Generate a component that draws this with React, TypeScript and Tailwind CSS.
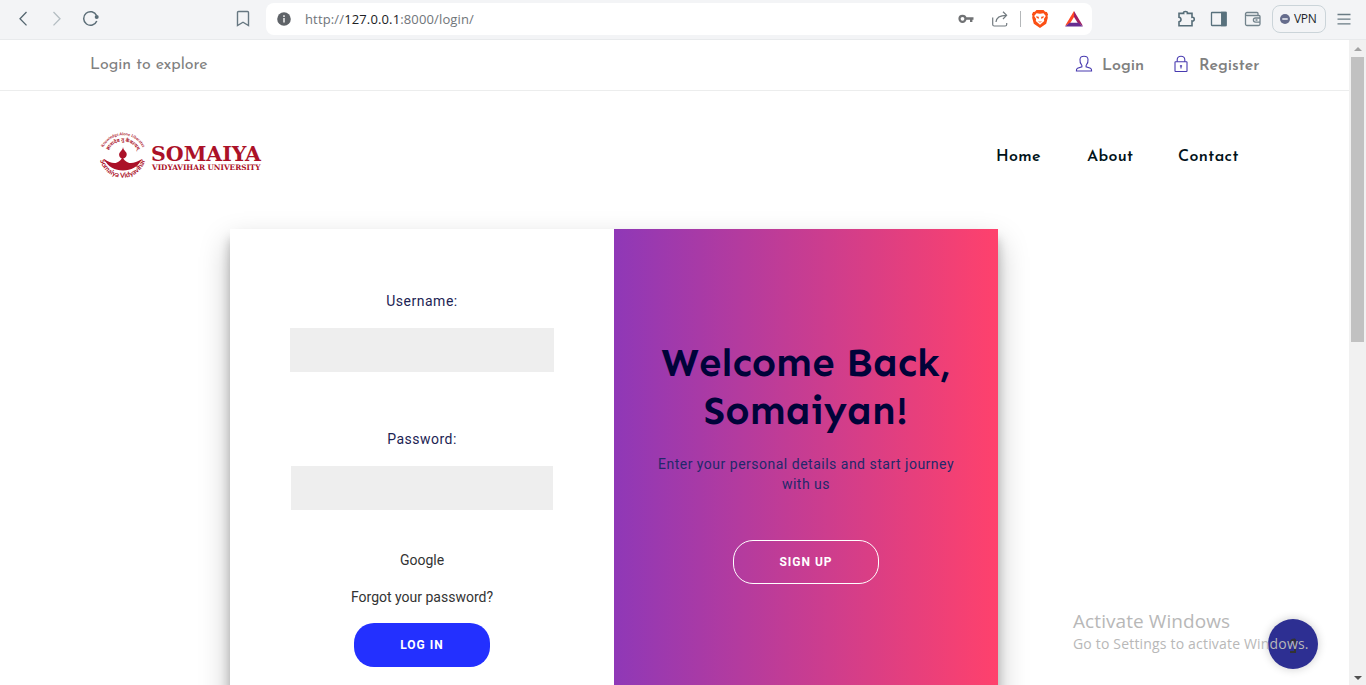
import React from "react";

const JOSEFIN = "font-['Josefin_Sans','Lato',sans-serif]";

function Toolbar() {
  return (
    <header className="flex h-10 shrink-0 items-center border-b border-[#e8eaec] bg-[#f3f4f6] pb-px text-[#5f7480]">
      <svg className="ml-[13px] h-5 w-5" viewBox="0 0 20 20" fill="none" stroke="#53656f" strokeWidth="1.3"><path d="M13.5 3 7 9.700l6.500 6.700" /></svg>
      <svg className="ml-[13px] h-5 w-5" viewBox="0 0 20 20" fill="none" stroke="#b4bdc2" strokeWidth="1.300"><path d="M7.500 3 14 9.700 7.500 16.400" /></svg>
      <svg className="ml-[15px] h-5 w-5" viewBox="0 0 20 20" fill="none" stroke="#5b6d77" strokeWidth="1.500"><path d="M15.600 6.500A6.800 6.800 0 1 0 15.800 12" /><circle cx="15.700" cy="8" r="2" fill="#5b6d77" stroke="none" /></svg>
      <svg className="ml-[132px] h-5 w-5" viewBox="0 0 20 20" fill="none" stroke="#667781" strokeWidth="1.400"><path d="M5.500 2.500h9a1 1 0 0 1 1 1v13L10 13.200 4.500 16.500v-13a1 1 0 0 1 1-1Z" /></svg>
      <div className="ml-[13px] flex h-8 w-[826px] shrink-0 items-center rounded-lg bg-white">
        <svg className="ml-[11px] h-[14px] w-[14px]" viewBox="0 0 14 14"><circle cx="7" cy="7" r="6.800" fill="#5f6368" /><path d="M6.200 6h1.600v4.500H6.200zM6.200 3.300h1.600v1.600H6.200z" fill="#e8e8e8" /></svg>
        <span className="ml-[14px] mt-px w-[171px] whitespace-nowrap font-['Open_Sans',sans-serif] text-[13px] tracking-[0.14px] text-[#70757a]">http://<span className="text-[#202124]">127.0.0.1</span>:8000/login/</span>
        <svg className="ml-[480px] h-5 w-5" viewBox="0 0 20 20" fill="none" stroke="#707274"><circle cx="6.500" cy="9.800" r="3" strokeWidth="2.200" /><path d="M10 9.500h7.500M15.200 9.500v3.500" strokeWidth="2.400" /></svg>
        <svg className="ml-[14px] h-5 w-5" viewBox="0 0 20 20" fill="none" stroke="#737b80" strokeWidth="1.200"><path d="M2.700 8.500v7q0 1.500 1.500 1.500h11q1.500 0 1.500-1.500V14M6 13c.300-4.600 3-6.700 10.500-6.700M13 2.800l3.600 3.500L13 10" /></svg>
        <span className="ml-[10px] h-4 w-px bg-[#b4b7b9]" />
        <BraveMark />
        <svg className="ml-[16px] h-[18px] w-[18px]" viewBox="0 0 18 18"><path d="M9 1 0 16l5.100-2.800L9 7Z" fill="#ff4724" /><path d="m9 1 9 15-5.100-2.800L9 7Z" fill="#9e1f63" /><path d="m0 16.500 4.700-3.700h8.600l4.700 3.700Z" fill="#662d91" /></svg>
      </div>
      <svg className="ml-[84px] h-5 w-5" viewBox="0 0 20 20" fill="none" stroke="#566d78" strokeWidth="1.600"><path d="M3 4.400h4.600c-.8-2.600 4.500-2.600 3.800 0H16v3.900c3-.7 3 4.400 0 3.700v4.700H3v-3.800q2-.3 2-2.300T3 8.300Z" /></svg>
      <svg className="ml-[13px] h-5 w-5" viewBox="0 0 20 20" fill="none" stroke="#58717d" strokeWidth="1.300"><rect x="2.500" y="3.500" width="14.500" height="13" rx=".5" /><path d="M12.700 3.500H17v13h-4.300Z" fill="#58717d" /></svg>
      <svg className="ml-[14px] h-5 w-5" viewBox="0 0 20 20" fill="none" stroke="#72838c" strokeWidth="1.300"><path d="M15 6.500V4.500a1 1 0 0 0-1-1H4a1.500 1.500 0 0 0 0 3h12a1 1 0 0 1 1 1V15a1.500 1.500 0 0 1-1.500 1.500H4A1.500 1.500 0 0 1 2.500 15V5M17 9h-4.500a2 2 0 0 0 0 4.200H17ZM12.500 11H14.500" /></svg>
      <div className="ml-[9px] flex h-7 w-[54px] shrink-0 items-center rounded-lg border border-[#cbd4d9]">
        <svg className="ml-[7px] h-[10px] w-[10px]" viewBox="0 0 10 10"><circle cx="5" cy="5" r="5" fill="#656c8c" /><path d="M2.300 4.200h5.400v1.600H2.300z" fill="#e8eaf0" /></svg>
        <span className="ml-1 font-['Open_Sans',sans-serif] text-[12px] tracking-[-0.3px] text-[#20262b]">VPN</span>
      </div>
      <svg className="ml-[11px] h-[14px] w-[14px]" viewBox="0 0 14 14" stroke="#6a7b84" strokeWidth="1.300"><path d="M.5 2.500h13M.5 7.200h13M.5 11.900h13" /></svg>
    </header>
  );
}

function BraveMark() {
  return (
    <svg className="ml-[10px] h-[18px] w-[18px]" viewBox="0 0 18 18">
      <path d="M5.500 0h7l1.600 1.700 1.800.2 1.200 2.600-.6 1.300.3 2-1.600 6L9 18l-6.200-4.200-1.600-6 .3-2L.900 4.500l1.200-2.600 1.800-.2Z" fill="#fb4f14" />
      <path d="m5.500 3.200 3.500.5 3.500-.5 2.300 2.800-1.900 3 .3 2L9 14.800 4.800 11l.3-2-1.900-3Z" fill="#fff" />
      <path d="m5 6.200 2.700.6.300 1.900-2.200-.7ZM13 6.200l-2.700.6-.3 1.900 2.200-.7ZM6.800 11l2.200.7 2.200-.7L9 12.700Z" fill="#fb4f14" />
    </svg>
  );
}

function TopBar() {
  return (
    <div className="flex h-[51px] shrink-0 items-center border-b border-[#eceded] pl-[90px] text-[16px] text-[#808080]">
      <span className={`w-[985px] ${JOSEFIN}`}>Login to explore</span>
      <svg className="-mt-[3px] h-[18px] w-[18px]" viewBox="0 0 18 18" fill="none" stroke="#483ab0" strokeWidth="1.100"><path d="M6.900 10.500C5.300 8.700 4.700 6.500 5 4.200 5.300 2 7 1.300 9 1.300s3.700.7 4 2.900c.3 2.300-.3 4.500-1.900 6.300v1.300l4.400 1.400q1.200.6 1.100 2.800H1.400q-.1-2.200 1.100-2.800l4.400-1.400Z" /></svg>
      <span className={`ml-[9px] mt-0.5 w-[72px] font-semibold ${JOSEFIN}`}>Login</span>
      <svg className="-mt-[3px] h-[18px] w-[14px]" viewBox="0 0 14 18" fill="none" stroke="#483ab0" strokeWidth="1.100"><rect x="1" y="6.700" width="12" height="9.800" rx=".5" /><path d="M3.200 6.700V4.800a3.800 3.600 0 0 1 7.600 0v1.900M7 10v3.500M5.900 11h2.200" /></svg>
      <span className={`ml-[11px] mt-0.5 font-semibold ${JOSEFIN}`}>Register</span>
    </div>
  );
}

function Logo() {
  return (
    <svg className="h-[52px] w-[180px] overflow-visible" viewBox="0 0 180 52" fill="#ab1128">
      <defs>
        <path id="upper" d="M6.500 20.500A22 22 0 0 1 49.500 20.500" />
        <path id="inner" d="M12.500 21.500A16 16 0 0 1 43.500 21.500" />
        <path id="lower" d="M4.500 24A23.300 23.300 0 0 0 51 24" />
      </defs>
      <path d="M9 27q8 5.500 13 3.500 4-1.500 5.500-6 1.500 4.500 5.500 6 5 2 14-3.500C43 35 36 38.500 28 38.500S13 35 9 27Z" />
      <path d="M28 15c.3 4 4.300 4.500 3.700 8-.5 2.300-2 3.300-3.800 3.500-2.200-.3-3.800-1.500-3.800-3.800 0-3.100 3.700-3.900 3.900-7.700Z" />
      <g className="font-['Lato','Noto_Sans',sans-serif] font-bold" textAnchor="middle">
        <text fontSize="4"><textPath href="#upper" startOffset="50%">Knowledge Alone Liberates</textPath></text>
        <text fontSize="4.800"><textPath href="#inner" startOffset="50%">ज्ञानादेव तु कैवल्यम्</textPath></text>
        <text fontSize="7"><textPath href="#lower" startOffset="50%">Somaiya Vidyavihar</textPath></text>
      </g>
      <g className="font-['DejaVu_Serif',serif] font-bold">
        <text x="56" y="28.500" fontSize="20.500" textLength="110" lengthAdjust="spacingAndGlyphs">SOMAIYA</text>
        <text x="57" y="38" fontSize="7.500" textLength="108.500" lengthAdjust="spacingAndGlyphs">VIDYAVIHAR UNIVERSITY</text>
      </g>
    </svg>
  );
}

function Nav() {
  return (
    <div className={`flex h-[138px] shrink-0 items-center pl-[95px] text-[16px] font-semibold text-[#001219] ${JOSEFIN}`}>
      <div className="-mt-1 w-[901px]"><Logo /></div>
      <nav className="-mt-1.5 flex">
        <span className="w-[91px] tracking-[0.32px]">Home</span>
        <span className="w-[91px] tracking-[0.32px]">About</span>
        <span className="tracking-[0.4px]">Contact</span>
      </nav>
    </div>
  );
}

function LoginCard() {
  return (
    <section className="ml-[230px] flex h-[480px] w-[768px] shrink-0 font-['Roboto',sans-serif] text-[14px] leading-5 shadow-[0_14px_28px_rgba(0,0,0,0.25),0_10px_10px_rgba(0,0,0,0.22)]">
      <form className="flex w-1/2 flex-col items-center bg-white pt-[62px]">
        <label className="tracking-[0.5px] text-[#1c2353]">Username:</label>
        <input className="mt-[17px] h-11 w-[264px] bg-[#eee]" />
        <label className="mt-[57px] tracking-[0.5px] text-[#1c2353]">Password:</label>
        <input type="password" className="mt-[17px] h-11 w-[262px] bg-[#eee]" />
        <a className="mt-10 text-[#333]">Google</a>
        <a className="mt-[17px] text-[#333]">Forgot your password?</a>
        <button type="button" className="mt-4 h-11 w-[136px] rounded-[20px] bg-[#2330ff] text-[12px] font-bold tracking-[1px] text-white">LOG IN</button>
      </form>
      <div className="flex w-1/2 flex-col items-center bg-linear-to-r/srgb from-[#8f38b7] to-[#ff416c] pt-[110px] text-center">
        <h1 className="font-['Sen','Lato',sans-serif] text-[40px] font-bold leading-[48px] text-[#000339]">Welcome Back,<br />Somaiyan!</h1>
        <p className="mt-[19px] tracking-[0.5px] text-[#23286b]">Enter your personal details and start journey<br />with us</p>
        <button type="button" className="mt-[46px] h-11 w-[146px] rounded-[20px] border border-white text-[12px] font-bold tracking-[1px] text-white">SIGN UP</button>
      </div>
    </section>
  );
}

function Scrollbar() {
  return (
    <div className="flex w-[17px] shrink-0 flex-col items-center bg-[#f1f1f1]">
      <svg className="h-[17px] w-[17px] shrink-0" viewBox="0 0 17 17"><path d="M5 11h8L9 7Z" fill="#a3a3a3" /></svg>
      <div className="h-[285px] w-[13px] bg-[#c1c1c1]" />
      <svg className="mt-auto h-[17px] w-[17px] shrink-0" viewBox="0 0 17 17"><path d="M5 8h8l-4 4Z" fill="#505050" /></svg>
    </div>
  );
}

export default function App() {
  return (
    <div className="relative flex h-[685px] w-[1366px] flex-col overflow-hidden bg-white">
      <Toolbar />
      <div className="flex min-h-0 flex-1">
        <main className="flex w-[1349px] shrink-0 flex-col overflow-hidden">
          <TopBar />
          <Nav />
          <LoginCard />
        </main>
        <Scrollbar />
      </div>
      <div className="absolute left-[1268px] top-[619px] flex h-[50px] w-[50px] items-center justify-center rounded-full bg-[#2d2f92] shadow-[0_0_10px_rgba(0,0,0,0.2)]">
        <svg className="mt-1 h-4 w-3" viewBox="0 0 12 16" fill="none" stroke="#333" strokeWidth="2"><path d="M3.500 5q.5-3.500 4-3.500Q9 3 8 6.500V14H3" /></svg>
      </div>
      <div className="absolute left-[1073px] top-[608px] whitespace-nowrap font-['Open_Sans',sans-serif] text-[#b8b8b8]">
        <div className="text-[19px] leading-[26px] tracking-[0.08px]">Activate Windows</div>
        <div className="text-[14px] leading-5 tracking-[0.18px]">Go to Settings to activate Windows.</div>
      </div>
    </div>
  );
}
